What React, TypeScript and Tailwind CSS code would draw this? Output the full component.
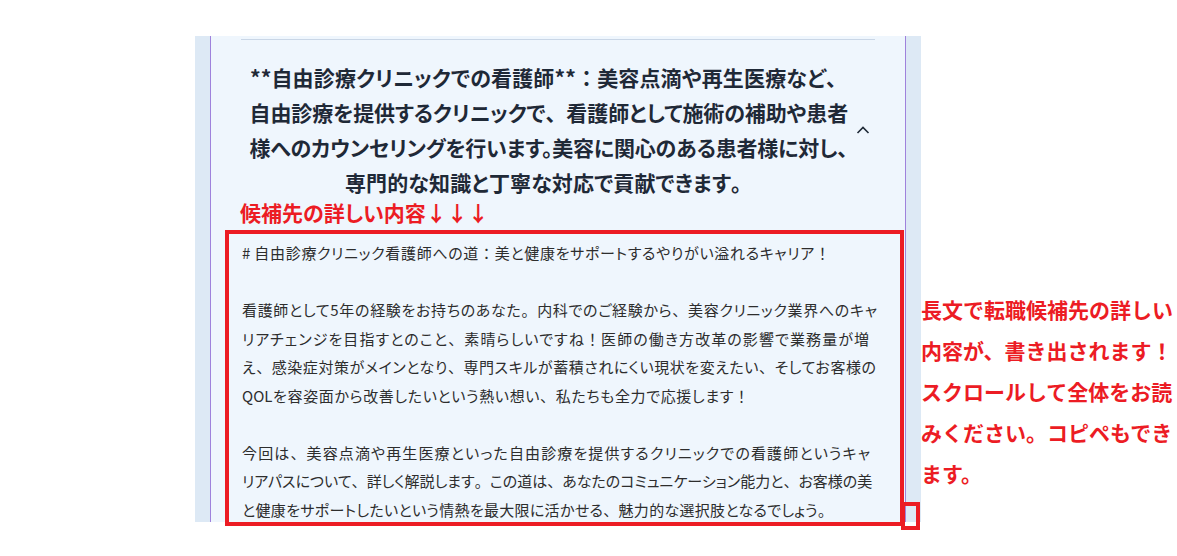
import React from "react";

const headerLines: { t: string; cls: string; full: boolean }[] = [
  { t: "**自由診療クリニックでの看護師**：美容点滴や再生医療など、", cls: "w-[597px] [text-align-last:justify]", full: true },
  { t: "自由診療を提供するクリニックで、看護師として施術の補助や患者", cls: "w-[598px] [text-align-last:justify] tracking-[-0.1px]", full: true },
  { t: "様へのカウンセリングを行います。美容に関心のある患者様に対し、", cls: "w-[598px] [text-align-last:justify] tracking-[-0.25px]", full: false },
  { t: "専門的な知識と丁寧な対応で貢献できます。", cls: "w-[407px] [text-align-last:justify]", full: true },
];

const bodyLines: { t: string; cls: string }[] = [
  { t: "# 自由診療クリニック看護師への道：美と健康をサポートするやりがい溢れるキャリア！", cls: "w-[588px]" },
  { t: "", cls: "" },
  { t: "看護師として5年の経験をお持ちのあなた。内科でのご経験から、美容クリニック業界へのキャ", cls: "w-[635px]" },
  { t: "リアチェンジを目指すとのこと、素晴らしいですね！医師の働き方改革の影響で業務量が増", cls: "w-[627px]" },
  { t: "え、感染症対策がメインとなり、専門スキルが蓄積されにくい現状を変えたい、そしてお客様の", cls: "w-[634px]" },
  { t: "QOLを容姿面から改善したいという熱い想い、私たちも全力で応援します！", cls: "w-[507px]" },
  { t: "", cls: "" },
  { t: "今回は、美容点滴や再生医療といった自由診療を提供するクリニックでの看護師というキャ", cls: "w-[628px]" },
  { t: "リアパスについて、詳しく解説します。この道は、あなたのコミュニケーション能力と、お客様の美", cls: "w-[629px]" },
  { t: "と健康をサポートしたいという情熱を最大限に活かせる、魅力的な選択肢となるでしょう。", cls: "w-[591px]" },
];

const noteLines = [
  "長文で転職候補先の詳しい",
  "内容が、書き出されます！",
  "スクロールして全体をお読",
  "みください。コピペもでき",
  "ます。",
];

function Prop({ text }: { text: string }) {
  const parts = text.split(/([、。：！])/);
  return (
    <>
      {parts.map((p, i) =>
        /^[、。：！]$/.test(p) ? (
          <span key={i} className="[font-feature-settings:normal]">
            {p}
          </span>
        ) : (
          <span key={i}>{p}</span>
        )
      )}
    </>
  );
}

export default function App() {
  return (
    <div className="relative w-[1177px] h-[556px] bg-white overflow-hidden font-['Noto_Sans_CJK_JP','Noto_Sans',sans-serif]">
      <div className="flex pt-[36px] pl-[195px]">
        {/* screenshot panel */}
        <div className="w-[726px] shrink-0 h-[486px] bg-[#dde9f5] px-[15px] flex overflow-hidden">
          <div className="flex-1 min-w-0 overflow-hidden bg-[#eff6fd] border-x border-[#9f82dc] flex flex-col">
            <div className="mt-[3px] mx-[30px] border-t border-[#c9d6e6]" />
            {/* accordion header */}
            <div className="flex items-center pt-[20px] pl-[30px] pr-[35px]">
              <div className="flex-1 min-w-0 flex flex-col items-center text-[21px] leading-[35px] font-bold text-[#1f2937] [font-feature-settings:'palt'] whitespace-nowrap">
                {headerLines.map((l, i) => (
                  <div key={i} className={l.cls}>
                    {l.full ? <Prop text={l.t} /> : l.t}
                  </div>
                ))}
              </div>
              <svg width="14" height="8" viewBox="0 0 14 8" fill="none" className="shrink-0">
                <polyline points="1.5,7 7,1.5 12.5,7" stroke="#1f2937" strokeWidth="1.6" />
              </svg>
            </div>
            {/* label */}
            <div className="pl-[29px] text-[21px] leading-[25px] font-bold text-[#ec1c24] [font-feature-settings:'palt'] whitespace-nowrap">
              候補先の詳しい内容↓↓↓
            </div>
            {/* content */}
            <div className="pt-[14px] pl-[31px] text-[15px] leading-[28.5px] text-[#2d2d2d] [font-feature-settings:'palt'] whitespace-nowrap">
              {bodyLines.map((l, i) => (
                <div key={i} className={"h-[28.5px] [text-align-last:justify] " + l.cls}>
                  <Prop text={l.t} />
                </div>
              ))}
            </div>
          </div>
        </div>
        {/* annotation text */}
        <div className="w-[256px] shrink-0 pt-[253px] text-[21px] leading-[41px] font-bold text-[#ec1c24] whitespace-nowrap">
          {noteLines.map((l, i) => (
            <div key={i}>{l}</div>
          ))}
        </div>
      </div>
      {/* annotation rectangles */}
      <div className="absolute left-[225px] top-[230px] w-[679px] h-[296px] border-[4px] border-[#ec1c24]" />
      <div className="absolute left-[901px] top-[502px] w-[19px] h-[28px] border-[4px] border-[#ec1c24]" />
    </div>
  );
}
